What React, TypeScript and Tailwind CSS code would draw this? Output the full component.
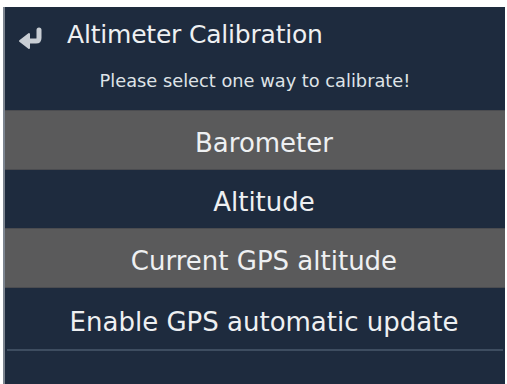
export default function App() {
  const options = [
    { label: "Barometer", active: true, h: "h-[60px]" },
    { label: "Altitude", active: false, h: "h-[58px]" },
    { label: "Current GPS altitude", active: true, h: "h-[60px]" },
    { label: "Enable GPS automatic update", active: false, h: "h-[61px]" },
  ];

  return (
    <div className="h-[384px] w-[507px] overflow-hidden bg-white pt-[7px] pl-[3px] pr-[2px]">
      <div
        className="flex h-full flex-col border-l-2 border-[#7d8590] bg-[#1e2b3e] text-[#eef0f2]"
        style={{ fontFamily: '"DejaVu Sans", Verdana, sans-serif' }}
      >
        {/* header */}
        <div className="flex h-[103px] flex-col">
          <div className="flex h-[54px] items-center pl-[12px]">
            <svg width="30" height="24" viewBox="0 0 30 24" className="mr-[20px] mt-[10px]">
              <path
                d="M22 3 V11 Q22 14 19 14 H11"
                fill="none"
                stroke="#c9ced4"
                strokeWidth="5"
                strokeLinejoin="round"
                strokeLinecap="round"
              />
              <path d="M3 14 L12 7 L12 21 Z" fill="#c9ced4" stroke="#c9ced4" strokeWidth="2" strokeLinejoin="round" />
            </svg>
            <span className="text-[25px] leading-none tracking-[-0.2px]">Altimeter Calibration</span>
          </div>
          <div className="pt-[11px] text-center text-[17.8px] leading-none text-[#dfe3e7]">
            Please select one way to calibrate!
          </div>
        </div>

        {/* options */}
        {options.map((o) => (
          <div
            key={o.label}
            className={`flex ${o.h} items-center justify-center pl-[18px] pt-[6px] text-[26px] leading-none ${
              o.active ? "bg-[#5a5a5b] border-y border-[#4b4c50]" : ""
            }`}
          >
            {o.label}
          </div>
        ))}
        <div className="mx-[2px] h-[2px] bg-[#3e4d60]" />
        <div className="flex-1" />
      </div>
    </div>
  );
}
